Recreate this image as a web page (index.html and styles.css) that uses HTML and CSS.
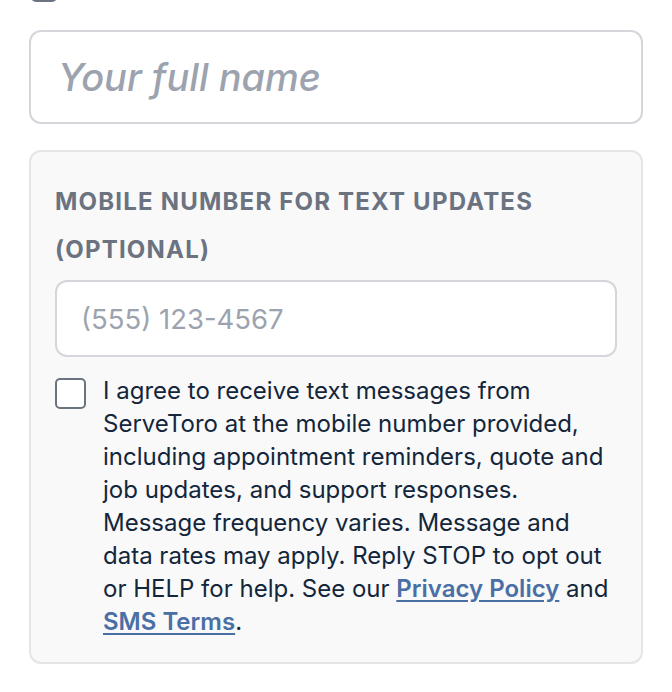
FILE: index.html
```html
<!DOCTYPE html>
<html lang="en">
<head>
<meta charset="utf-8">
<title>Contact form</title>
<link rel="stylesheet" href="styles.css">
</head>
<body>
<div class="page">
  <div class="prev-row">
    <span class="prev-box"></span>
    <span class="prev-text">Save my details for next time</span>
  </div>
  <div class="field-name">
    <input class="name-input" type="text" placeholder="Your full name">
  </div>
  <div class="sms-card">
    <label class="sms-label" for="phone">Mobile number for text updates (optional)</label>
    <input id="phone" class="phone-input" type="tel" placeholder="(555) 123-4567">
    <div class="consent">
      <span class="check"></span>
      <p class="consent-text">I agree to receive text messages from ServeToro at the mobile number provided, including appointment reminders, quote and job updates, and support responses. Message frequency varies. Message and data rates may apply. Reply STOP to opt out or HELP for help. See our <a href="#">Privacy Policy</a> and <a href="#">SMS Terms</a>.</p>
    </div>
  </div>
</div>
</body>
</html>
```
FILE: styles.css
```css
* { box-sizing: border-box; }
html, body { margin: 0; padding: 0; background: #ffffff; }
body { font-family: Inter, "Noto Sans", sans-serif; }
.page {
  display: flow-root;
  padding: 0 29px;
  width: 672px;
  height: 692px;
  overflow: hidden;
}
.prev-row {
  display: flex;
  align-items: flex-end;
  gap: 16px;
  margin-top: -30px;
  height: 32px;
  padding-left: 2px;
}
.prev-box {
  flex: none;
  width: 26px;
  height: 26px;
  border: 2px solid #6b7280;
  border-radius: 5px;
  background: #fff;
}
.prev-text {
  font-size: 24px;
  line-height: 33px;
  color: #13263b;
}
.field-name { margin-top: 28px; }
.name-input {
  display: block;
  width: 614px;
  height: 94px;
  border: 2px solid #d4d6db;
  border-radius: 12px;
  padding: 0 27px;
  font-family: Inter, sans-serif;
  font-size: 38px;
  font-style: italic;
  font-weight: 500;
  background: #fff;
  outline: none;
}
.name-input::placeholder { color: #9ca3af; }
.sms-card {
  margin-top: 26px;
  width: 614px;
  height: 514px;
  background: #f9f9fa;
  border: 2px solid #e5e5e7;
  border-radius: 12px;
  padding: 26px 24px 24px;
}
.sms-label {
  display: block;
  font-size: 24px;
  line-height: 48px;
  font-weight: 700;
  letter-spacing: 0.05em;
  text-transform: uppercase;
  color: #6b7280;
}
.phone-input {
  display: block;
  margin-top: 6px;
  width: 562px;
  height: 77px;
  border: 2px solid #d4d6db;
  border-radius: 12px;
  padding: 0 24px;
  font-family: Inter, sans-serif;
  font-size: 27.5px;
  background: #fff;
  outline: none;
}
.phone-input::placeholder { color: #9ca3af; }
.consent {
  display: flex;
  align-items: flex-start;
  gap: 17px;
  margin-top: 17px;
}
.check {
  flex: none;
  width: 31px;
  height: 31px;
  margin-top: 4px;
  border: 2px solid #6b7280;
  border-radius: 5px;
  background: #fff;
}
.consent-text {
  margin: 0;
  font-size: 24px;
  line-height: 33px;
  color: #13263b;
}
.consent-text a {
  color: #4a6fa5;
  font-weight: 600;
  text-decoration: underline;
  text-underline-offset: 3px;
}
```
